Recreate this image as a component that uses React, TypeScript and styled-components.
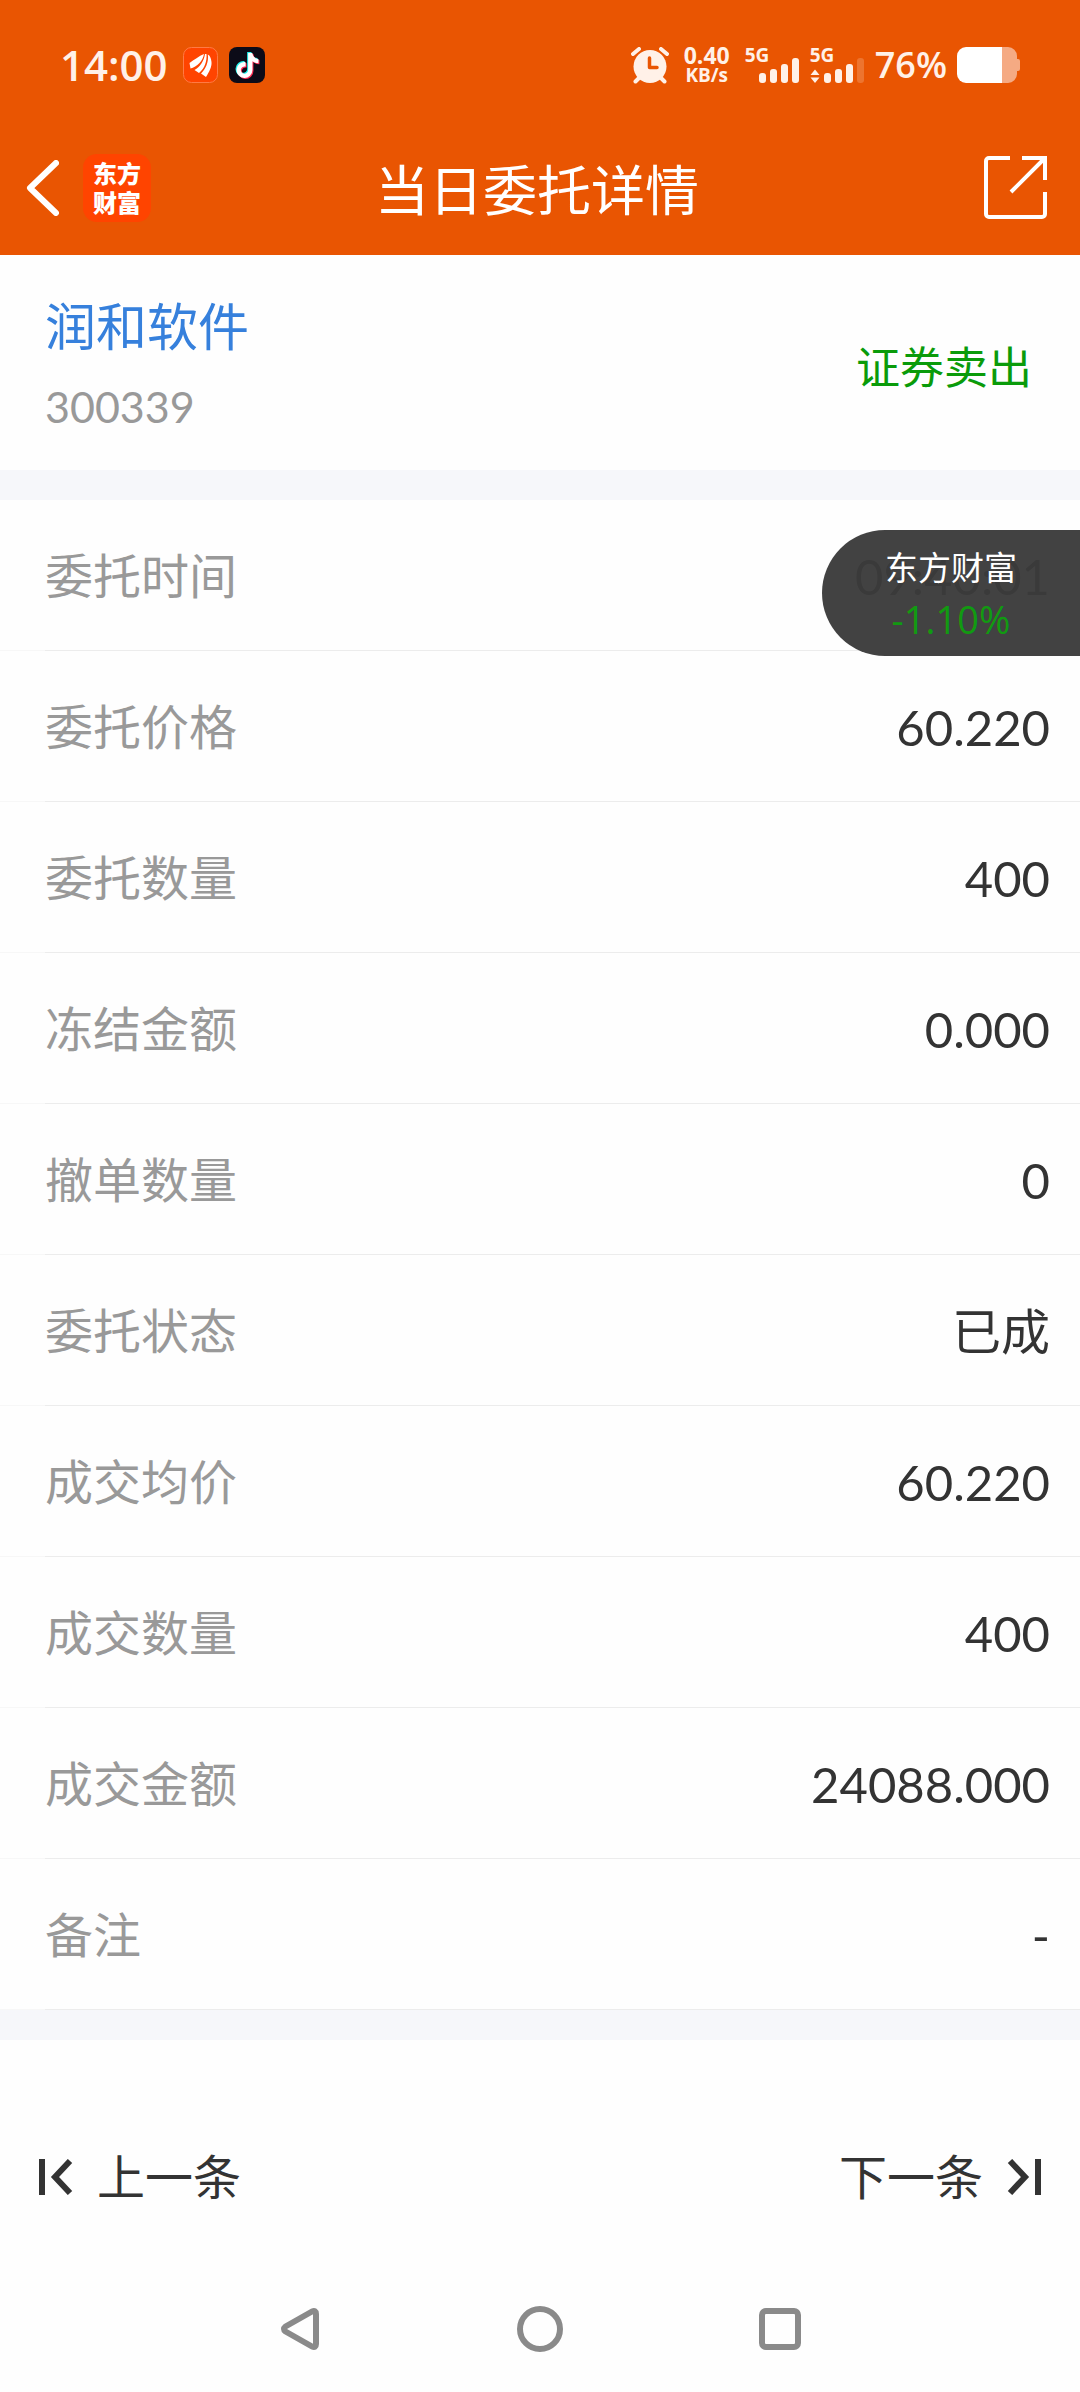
import React from "react";
import styled, { createGlobalStyle } from "styled-components";
import { FaTiktok } from "react-icons/fa6";

const CJK = `"Noto Sans CJK SC", sans-serif`;
const BODY = `Lato, ${CJK}`;
const STATUS = `"Open Sans", ${CJK}`;

const color = {
  brand: "#e95502",
  brandTile: "#ff4400",
  status: "#fff1e8",
  page: "#fefefe",
  band: "#f6f7fa",
  line: "#ececec",
  lineSoft: "#f7f7f7",
  label: "#999999",
  text: "#333333",
  link: "#3680dc",
  sell: "#0a9b0a",
};

const GlobalStyle = createGlobalStyle`
  *, *::before, *::after { box-sizing: border-box; }
  body { margin: 0; background: ${color.page}; }
  h1, h2, p, dl, dt, dd { margin: 0; font-weight: 400; }
  svg { display: block; flex: none; }
`;

const Page = styled.div`
  position: relative;
  display: flex;
  flex-direction: column;
  min-height: 100vh;
  background: ${color.page};
  color: ${color.text};
  font-family: ${BODY};
`;

const Header = styled.header`
  background: ${color.brand};
  color: #fff;
  font-family: ${CJK};
`;

const StatusBar = styled.div`
  display: flex;
  align-items: center;
  justify-content: space-between;
  height: 130px;
  padding: 0 60px;
  color: ${color.status};
  font-family: ${STATUS};
  font-weight: 600;
`;

const StatusGroup = styled.div<{ $gap: number }>`
  display: flex;
  align-items: center;
  gap: ${(p) => p.$gap}px;
`;

const Clock = styled.span`
  margin-right: 4px;
  font-size: 42px;
  line-height: 48px;
`;

const NetSpeed = styled.span`
  display: flex;
  flex-direction: column;
  align-items: center;
  font-size: 23px;
  line-height: 20px;
  font-weight: 700;
`;

const SpeedUnit = styled.span`
  font-size: 19px;
`;

const Signal = styled.span`
  display: grid;
  font-size: 19px;
  line-height: 16px;
  font-weight: 700;

  & > * {
    grid-area: 1 / 1;
  }
`;

const BatteryLevel = styled.span`
  font-size: 36px;
  line-height: 48px;
`;

const NavBar = styled.div`
  display: grid;
  grid-template-columns: 1fr auto 1fr;
  align-items: center;
  height: 125px;
  padding: 0 32px 10px 26px;
`;

const NavStart = styled.div`
  display: flex;
  align-items: center;
  gap: 24px;
`;

const IconButton = styled.button`
  display: flex;
  align-items: center;
  justify-content: center;
  padding: 0;
  border: 0;
  background: none;
  color: inherit;
  cursor: pointer;
`;

const ShareButton = styled(IconButton)`
  justify-self: end;
`;

const BrandTile = styled.span`
  display: flex;
  flex-direction: column;
  align-items: center;
  justify-content: center;
  width: 68px;
  height: 68px;
  border-radius: 14px;
  background: ${color.brandTile};
  font-family: ${BODY};
  font-size: 24px;
  line-height: 29px;
  font-weight: 900;
`;

const Title = styled.h1`
  font-size: 54px;
  line-height: 64px;
`;

const Stock = styled.section`
  display: flex;
  align-items: center;
  justify-content: space-between;
  padding: 32px 48px 24px 45px;
`;

const StockName = styled.h2`
  color: ${color.link};
  font-size: 51px;
  line-height: 80px;
`;

const StockCode = styled.p`
  color: ${color.label};
  font-size: 43px;
  line-height: 79px;
`;

const Side = styled.p`
  color: ${color.sell};
  font-size: 44px;
  line-height: 64px;
`;

const Band = styled.div`
  height: 30px;
  background: ${color.band};
`;

const Details = styled.dl`
  display: flex;
  flex-direction: column;
`;

const Row = styled.div`
  display: flex;
  align-items: center;
  justify-content: space-between;
  height: 151px;
  padding: 0 30px 0 45px;
  background: linear-gradient(to right, ${color.lineSoft} 45px, ${color.line} 45px) bottom / 100% 1px no-repeat;
`;

const Label = styled.dt`
  color: ${color.label};
  font-size: 48px;
  line-height: 64px;
`;

const Value = styled.dd`
  font-size: 49px;
  line-height: 64px;
`;

const Pager = styled.nav`
  display: flex;
  justify-content: space-between;
  padding: 102px 39px 54px;
`;

const PagerButton = styled(IconButton)`
  gap: 24px;
  height: 70px;
  font-family: ${BODY};
  font-size: 48px;
  line-height: 64px;
`;

const SystemBar = styled.nav`
  display: grid;
  grid-template-columns: repeat(3, 1fr);
  width: 100%;
  max-width: 720px;
  height: 126px;
  margin: 0 auto;
  color: #8a8a8a;
`;

const Ticker = styled.aside`
  position: absolute;
  top: 530px;
  right: 0;
  display: flex;
  flex-direction: column;
  align-items: center;
  justify-content: center;
  width: 258px;
  height: 126px;
  border-radius: 63px 0 0 63px;
  background: rgba(58, 58, 58, 0.96);
  color: #fff;
  font-size: 33px;
  line-height: 52px;
`;

const TickerChange = styled.span`
  color: #119a11;
  font-family: ${STATUS};
  font-size: 38px;
`;

const rows: [string, string][] = [
  ["委托时间", "09:40:01"],
  ["委托价格", "60.220"],
  ["委托数量", "400"],
  ["冻结金额", "0.000"],
  ["撤单数量", "0"],
  ["委托状态", "已成"],
  ["成交均价", "60.220"],
  ["成交数量", "400"],
  ["成交金额", "24088.000"],
  ["备注", "-"],
];

const EastMoneyIcon = () => (
  <svg width="35" height="36" viewBox="0 0 35 36" aria-hidden="true">
    <rect x="0.5" y="0.5" width="34" height="35" rx="8" fill={color.brandTile} stroke="#ff7a45" />
    <g fill="#fff">
      <path d="M21 7 C16 9 11 13 6.500 16 L7.500 21.500 C14 20 20 14 21 7Z" />
      <path d="M22 7 C21 14 17 20 11.500 23 L16 26 C22 21 24 14 23.500 7Z" />
      <path d="M24.800 7.500 C26 15 22.500 22 18 26.500 L23 30 C26 25 29 20 28.500 15 C28 11 27 8.500 24.800 7.500Z" />
    </g>
  </svg>
);

const DouyinIcon = () => (
  <svg width="36" height="36" viewBox="0 0 36 36" aria-hidden="true">
    <rect width="36" height="36" rx="8" fill="#0c0b18" />
    <FaTiktok x={5} y={5} size={25} color="#25f4ee" />
    <FaTiktok x={7} y={7} size={25} color="#fe2c55" />
    <FaTiktok x={6} y={6} size={25} color="#fff" />
  </svg>
);

const AlarmIcon = () => (
  <svg width="38" height="37" viewBox="0 0 38 37" fill="none" aria-hidden="true">
    <path d="M8 31 4.500 34.500M30 31 33.500 34.500M2 7 8 2M36 7 30 2" stroke="currentColor" strokeWidth="4" strokeLinecap="round" />
    <circle cx="19" cy="19.500" r="16.500" fill="currentColor" />
    <path d="M18.500 11v9.500h7.500" stroke={color.brand} strokeWidth="3.500" strokeLinecap="round" strokeLinejoin="round" />
  </svg>
);

const SignalBars = ({ level, arrows = false }: { level: number; arrows?: boolean }) => (
  <svg width="55" height="36" viewBox="0 0 55 36" fill="currentColor" aria-hidden="true">
    {arrows && <path d="M5 22.500 9.500 28H0.500ZM5 36 9.500 30.500H0.500Z" />}
    {[10, 14, 19, 25].map((h, i) => (
      <rect key={h} x={14 + i * 11} y={36 - h} width="7" height={h} rx="3" opacity={i < level ? 1 : 0.2} />
    ))}
  </svg>
);

const BatteryIcon = () => (
  <svg width="63" height="36" viewBox="0 0 63 36" aria-hidden="true">
    <path d="M45 0h6a9 9 0 0 1 9 9v3h1a2 2 0 0 1 2 2v8a2 2 0 0 1-2 2h-1v3a9 9 0 0 1-9 9h-6Z" fill="#f5aa83" />
    <path d="M9 0h36v36H9a9 9 0 0 1-9-9V9a9 9 0 0 1 9-9Z" fill="#fff" />
  </svg>
);

const BackIcon = () => (
  <svg width="33" height="56" viewBox="0 0 33 56" fill="none" aria-hidden="true">
    <path d="M30 3 4 28 30 53" stroke="currentColor" strokeWidth="6" strokeLinecap="round" strokeLinejoin="round" />
  </svg>
);

const ShareIcon = () => (
  <svg width="64" height="64" viewBox="0 0 64 64" fill="none" stroke="currentColor" strokeWidth="4" aria-hidden="true">
    <path d="M26 2H5a3 3 0 0 0-3 3V58a3 3 0 0 0 3 3H58a3 3 0 0 0 3-3V36" />
    <path d="M38 2H61V24M60 3 27 36" />
  </svg>
);

const StepIcon = ({ forward = false }: { forward?: boolean }) => (
  <svg width="34" height="36" viewBox="0 0 34 36" fill="none" stroke="currentColor" strokeWidth="6" aria-hidden="true">
    <path d={forward ? "M31 0V36M3 2 18 18 3 34" : "M3 0V36M31 2 16 18 31 34"} />
  </svg>
);

export default function App() {
  return (
    <Page>
      <GlobalStyle />
      <Header>
        <StatusBar>
          <StatusGroup $gap={11}>
            <Clock>14:00</Clock>
            <EastMoneyIcon />
            <DouyinIcon />
          </StatusGroup>
          <StatusGroup $gap={15}>
            <AlarmIcon />
            <NetSpeed>
              0.40
              <SpeedUnit>KB/s</SpeedUnit>
            </NetSpeed>
            <StatusGroup $gap={10}>
              <Signal>
                <span>5G</span>
                <SignalBars level={4} />
              </Signal>
              <Signal>
                <span>5G</span>
                <SignalBars level={3} arrows />
              </Signal>
              <BatteryLevel>76%</BatteryLevel>
              <BatteryIcon />
            </StatusGroup>
          </StatusGroup>
        </StatusBar>
        <NavBar>
          <NavStart>
            <IconButton type="button" aria-label="返回">
              <BackIcon />
            </IconButton>
            <BrandTile>
              <span>东方</span>
              <span>财富</span>
            </BrandTile>
          </NavStart>
          <Title>当日委托详情</Title>
          <ShareButton type="button" aria-label="分享">
            <ShareIcon />
          </ShareButton>
        </NavBar>
      </Header>

      <main>
        <Stock>
          <div>
            <StockName>润和软件</StockName>
            <StockCode>300339</StockCode>
          </div>
          <Side>证券卖出</Side>
        </Stock>
        <Band />
        <Details>
          {rows.map(([label, value]) => (
            <Row key={label}>
              <Label>{label}</Label>
              <Value>{value}</Value>
            </Row>
          ))}
        </Details>
        <Band />
      </main>

      <Pager aria-label="委托记录">
        <PagerButton type="button">
          <StepIcon />
          上一条
        </PagerButton>
        <PagerButton type="button">
          下一条
          <StepIcon forward />
        </PagerButton>
      </Pager>

      <SystemBar aria-label="系统导航">
        <IconButton type="button" aria-label="后退">
          <svg width="38" height="42" viewBox="0 0 38 42" fill="none" aria-hidden="true">
            <path d="M4.500 18.500 31 3.500Q35 2 35 6V36Q35 40 31 38.500L4.500 23.500Q1.500 21 4.500 18.500Z" stroke="currentColor" strokeWidth="6" strokeLinejoin="round" />
          </svg>
        </IconButton>
        <IconButton type="button" aria-label="主屏幕">
          <svg width="46" height="46" viewBox="0 0 46 46" fill="none" aria-hidden="true">
            <circle cx="23" cy="23" r="20" stroke="currentColor" strokeWidth="6" />
          </svg>
        </IconButton>
        <IconButton type="button" aria-label="最近任务">
          <svg width="42" height="42" viewBox="0 0 42 42" fill="none" aria-hidden="true">
            <rect x="3" y="3" width="36" height="36" rx="4" stroke="currentColor" strokeWidth="6" />
          </svg>
        </IconButton>
      </SystemBar>

      <Ticker>
        <span>东方财富</span>
        <TickerChange>-1.10%</TickerChange>
      </Ticker>
    </Page>
  );
}
